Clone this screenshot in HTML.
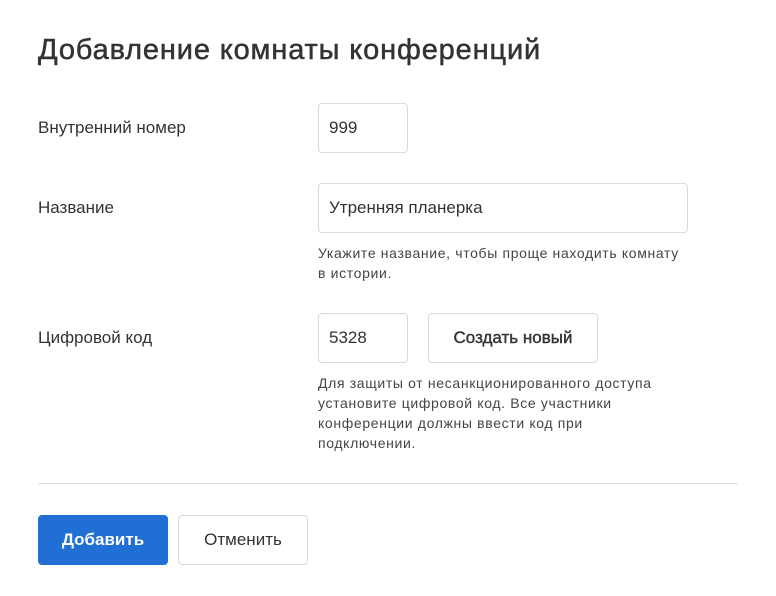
<!DOCTYPE html>
<html><head><meta charset="utf-8"><style>
body{margin:0;background:#fff;font-family:"Liberation Sans",sans-serif;color:#333;width:776px;height:596px;position:relative;overflow:hidden}
.a{position:absolute}
h1{position:absolute;left:38px;top:34px;margin:0;font-size:29px;font-weight:normal;color:#333;letter-spacing:0.85px;-webkit-text-stroke:0.5px #333}
.lbl{font-size:17px;color:#333}
.box{position:absolute;border:1px solid #d9d9d9;border-radius:4px;box-sizing:border-box;font-size:17px;color:#333;padding-left:10px;display:flex;align-items:center}
.hint{font-size:14px;line-height:20px;color:#444;letter-spacing:0.65px}
.btn{position:absolute;box-sizing:border-box;border-radius:4px;display:flex;align-items:center;justify-content:center;font-size:17px}
</style></head><body>
<h1>Добавление комнаты конференций</h1>
<div class="a lbl" style="left:38px;top:118px">Внутренний номер</div>
<div class="box" style="left:318px;top:103px;width:90px;height:50px">999</div>
<div class="a lbl" style="left:38px;top:198px">Название</div>
<div class="box" style="left:318px;top:183px;width:370px;height:50px">Утренняя планерка</div>
<div class="a hint" style="left:318px;top:243px">Укажите название, чтобы проще находить комнату<br>в истории.</div>
<div class="a lbl" style="left:38px;top:328px">Цифровой код</div>
<div class="box" style="left:318px;top:313px;width:90px;height:50px">5328</div>
<div class="btn" style="left:428px;top:313px;width:170px;height:50px;border:1px solid #d9d9d9;color:#333;-webkit-text-stroke:0.4px #333">Создать новый</div>
<div class="a hint" style="left:318px;top:373px">Для защиты от несанкционированного доступа<br>установите цифровой код. Все участники<br>конференции должны ввести код при<br>подключении.</div>
<div class="a" style="left:38px;top:483px;width:700px;height:1px;background:#ddd"></div>
<div class="btn" style="left:38px;top:515px;width:130px;height:50px;background:#1f6fd4;color:#fff;font-weight:bold">Добавить</div>
<div class="btn" style="left:178px;top:515px;width:130px;height:50px;border:1px solid #d9d9d9;color:#333">Отменить</div>
</body></html>
